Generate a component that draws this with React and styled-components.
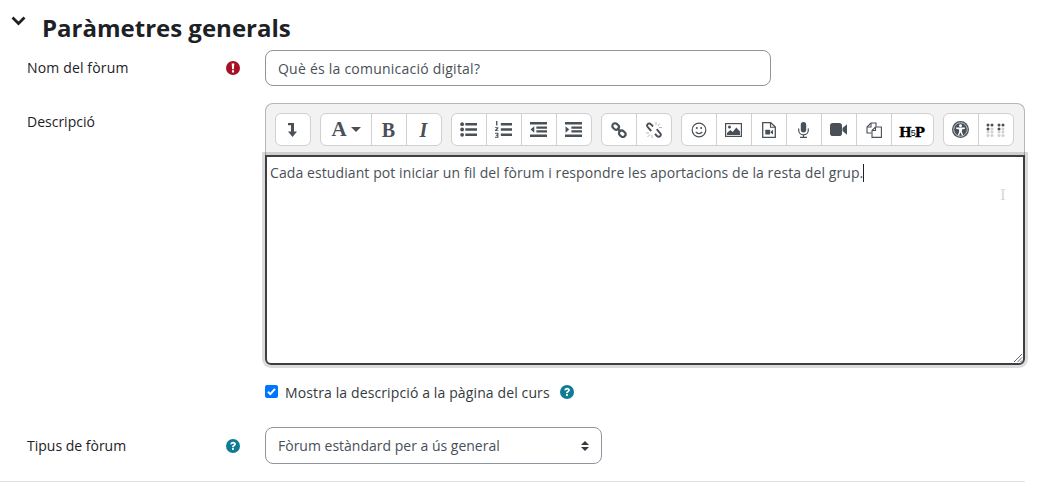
import React from 'react';
import styled, { createGlobalStyle } from 'styled-components';

const Global = createGlobalStyle`
  html, body { margin: 0; padding: 0; background: #fff; }
  body { font-family: "Open Sans", "Noto Sans", sans-serif; font-size: 14px; color: #1d2125; }
  * { box-sizing: border-box; }
`;
const Page = styled.div`
  width: 1048px; height: 483px; overflow: hidden; display: flex; flex-direction: column;
`;
const Section = styled.section`
  width: 1025px; height: 482px; border-bottom: 1px solid #dee2e6; padding-top: 12px;
`;
const Header = styled.div`
  display: flex; align-items: flex-start; height: 33px; padding-left: 11px;
`;
const Chevron = styled.svg`
  width: 15px; height: 10px; margin-top: 4px; margin-right: 16px; flex: none;
`;
const Heading = styled.h3`
  margin: 0; font-size: 24px; line-height: 32px; font-weight: 700; color: #1d2125;
`;
const Row = styled.div`
  display: flex; align-items: ${p => p.$top ? 'flex-start' : 'center'}; padding-left: 27px; margin-top: ${p => p.$mt || 0}px;
`;
const LabelCol = styled.div`
  width: 238px; flex: none; display: flex; align-items: center; justify-content: space-between; padding-right: 25px;
  padding-top: ${p => p.$pt || 0}px; line-height: 20px;
`;
const LabelText = styled.span`
  letter-spacing: ${p => p.$ls || 0}px;
`;
const Icon = styled.svg`
  width: 14px; height: 14px; flex: none;
`;
const Input = styled.div`
  width: 506px; height: 36px; border: 1px solid #8f959e; border-radius: 8px; padding: 0 12px;
  display: flex; align-items: center; color: #495057; letter-spacing: .23px;
`;
const Editor = styled.div`
  width: 760px; flex: none;
`;
const Toolbar = styled.div`
  height: 52px; background: #f2f2f2; border: 1px solid #b7b7b7; border-bottom: 0; border-radius: 8px 8px 0 0;
  display: flex; align-items: flex-start; padding: 9px 0 0 8.5px; gap: 9px;
`;
const Group = styled.div`
  display: flex; height: 33px; background: #fff; border: 1px solid #d0d0d0; border-radius: 6px; overflow: hidden;
`;
const Btn = styled.div`
  width: ${p => p.$w || 35}px; height: 100%; display: flex; align-items: center; justify-content: center; flex: none;
  &:first-child { width: ${p => (p.$w || 35) - 1}px; }
  & + & { border-left: 1px solid #d0d0d0; }
`;
const Glyph = styled.svg`
  width: ${p => p.$w || 16}px; height: ${p => p.$h || 16}px; display: block;
`;
const SerifGlyph = styled.span`
  font: ${p => p.$i ? 'italic' : 'normal'} 700 ${p => p.$s || 20}px "Liberation Serif", serif; color: #495057; line-height: 1;
`;
const AWrap = styled.span`
  display: flex; align-items: center; gap: 4px; margin-left: 1px;
`;
const Caret = styled.span`
  width: 0; height: 0; border: 5px solid transparent; border-top: 5px solid #495057; border-bottom: 0;
`;
const H5PMark = styled.span`
  display: flex; align-items: baseline; margin-top: 7px; color: #000;
  font: 700 13.5px "DejaVu Serif", serif; line-height: 1; -webkit-text-stroke: .3px #000;
`;
const H5PFive = styled.span`
  font: 400 9px "Liberation Sans", sans-serif; margin: 0 -1px; position: relative; top: -1px; -webkit-text-stroke: 0;
`;
const TextAreaWrap = styled.div`
  position: relative; height: 210px; border: 2px solid #3c4044; border-radius: 0 0 6px 6px;
  box-shadow: 0 0 0 3px rgba(0,0,0,0.14); padding: 6px 3px; line-height: 20px; color: #495057;
  letter-spacing: .09px;
`;
const Cursor = styled.span`
  display: inline-block; width: 1px; height: 18px; background: #222; vertical-align: -4px;
`;
const Grip = styled.svg`
  position: absolute; right: 0; bottom: 0; width: 12px; height: 12px;
`;
const IBeam = styled.span`
  position: absolute; left: 733px; top: 28px; font: 300 17px "Liberation Serif", serif; color: #d8d8d8;
`;
const CheckRow = styled.div`
  display: flex; align-items: center; margin: 17px 0 0 265px; height: 20px; color: #343a40; letter-spacing: .12px;
`;
const Check = styled.span`
  width: 13px; height: 13px; background: #0075ff; border-radius: 2px; margin-right: 7px; display: flex; align-items: center; justify-content: center; margin-top: -1px;
`;
const HelpAfter = styled.span`
  margin-left: 10px; display: flex;
`;
const Select = styled.div`
  width: 337px; height: 37px; border: 1px solid #8f959e; border-radius: 8px; padding: 0 12px;
  display: flex; align-items: center; justify-content: space-between; color: #495057;
`;
const Arrows = styled.svg`
  width: 8px; height: 10px; flex: none;
`;

const C = '#495057';
const Help = () => (
  <Icon viewBox="0 0 16 16">
    <circle cx="8" cy="8" r="8" fill="#0f7c93" />
    <path d="M4.900 6.100C5 4.300 6.400 3.200 8.100 3.200c1.900 0 3.200 1.100 3.200 2.600 0 1.300-.8 1.900-1.600 2.400-.7.400-.9.700-.9 1.300H6.900c0-1.300.4-1.900 1.300-2.400.6-.4 1-.7 1-1.200 0-.6-.5-.9-1.100-.9-.7 0-1.100.4-1.200 1.100zM6.900 10.300h2V12.500h-2z" fill="#fff" />
  </Icon>
);
const Lines = ({ children }) => <Glyph viewBox="0 0 16 16" $w={17} $h={17} fill={C}>{children}</Glyph>;

const groups = [
  [{ k: 'c', el: <Glyph viewBox="0 0 9 14" $w={9} $h={14}><path d="M0 0h6v8.500h3L4.500 14 0 8.500h3V2.200H0z" fill={C} /></Glyph> }],
  [
    { k: 'a', el: <AWrap><SerifGlyph $s={21}>A</SerifGlyph><Caret /></AWrap>, w: 51 },
    { k: 'b', el: <SerifGlyph $s={20}>B</SerifGlyph> },
    { k: 'i', el: <SerifGlyph $i $s={20}>I</SerifGlyph> },
  ],
  [
    { k: 'ul', el: <Lines><circle cx="2" cy="3" r="1.800"/><circle cx="2" cy="8" r="1.800"/><circle cx="2" cy="13" r="1.800"/><path d="M5 1.800h11v2.400H5zM5 6.800h11v2.400H5zM5 11.800h11v2.400H5z"/></Lines> },
    { k: 'ol', el: <Lines><path d="M5.500 1.800H16v2.400H5.500zM5.500 6.800H16v2.400H5.500zM5.500 11.800H16v2.400H5.500z"/><path d="M1 0h1.300v4.200H1zM0 5.800h3.200v1L1.600 8.600h1.600v.9H0v-.9L1.700 6.700H0zM0 11h3.200v4.800H0v-.9h2.100v-1H.8v-.9h1.300v-1H0z"/></Lines> },
    { k: 'od', el: <Lines><path d="M0 1h16v2.400H0zM6 5.200h10v2H6zM6 8.800h10v2H6zM0 12.600h16V15H0zM4 5v6L.5 8z"/></Lines> },
    { k: 'in', el: <Lines><path d="M0 1h16v2.400H0zM6 5.200h10v2H6zM6 8.800h10v2H6zM0 12.600h16V15H0zM.5 5v6L4 8z"/></Lines> },
  ],
  [
    { k: 'ln', el: <Glyph viewBox="0 0 16 16" fill="none" stroke={C} strokeWidth="2.200"><rect x="1.200" y="1.800" width="7" height="5.400" rx="2.700" transform="rotate(42 4.700 4.400)"/><rect x="7.800" y="9" width="7" height="5.400" rx="2.700" transform="rotate(42 11.300 11.600)"/><path d="M6 6.500l4 3.200"/></Glyph> },
    { k: 'ul2', el: <Glyph viewBox="0 0 16 16" fill="none" stroke={C} strokeWidth="1.900"><path d="M7 4.500L5 2.300C3.900 1.200 2.400 1.400 1.700 2.200.9 3 1 4.300 1.800 5.200l3.400 3.800"/><path d="M9 11.800l2 2.200c1 1 2.500.9 3.200.1.800-.9.700-2.200-.2-3.100L10.700 7.200"/><path d="M10 0v3M13.700 1.500L12 4M16 5.500h-3M1.500 15L4 12.500M6 16v-3M0 11h3" stroke="#b5b5b5" strokeWidth="1"/></Glyph> },
  ],
  [
    { k: 'em', el: <Glyph viewBox="0 0 16 16" fill="none" stroke={C} strokeWidth="1.200"><circle cx="8" cy="8" r="6.800"/><path d="M4.800 9.800c1.600 2.300 4.800 2.300 6.400 0"/><circle cx="5.800" cy="6" r="1" fill={C} stroke="none"/><circle cx="10.200" cy="6" r="1" fill={C} stroke="none"/></Glyph> },
    { k: 'im', el: <Glyph viewBox="0 0 17 14" $w={17} $h={14}><rect x=".6" y=".6" width="15.800" height="12.800" fill="#fff" stroke={C} strokeWidth="1.200"/><path d="M2 12v-2l3.400-3 2.300 2 3.600-4.500L15 8.500V12z" fill={C}/><circle cx="4.500" cy="4" r="1.500" fill={C}/></Glyph> },
    { k: 'vd', el: <Glyph viewBox="0 0 14 16" $w={14} $h={16}><path d="M.7.700h8L13.300 5v10.300H.7z" fill="#fff" stroke={C} strokeWidth="1.300"/><path d="M8.500.8V5.300h4.800" fill="none" stroke={C} strokeWidth="1.100"/><rect x="3.300" y="7.700" width="4.700" height="4.800" rx=".6" fill={C}/><path d="M8.300 10l2.700-2.200v4.600L8.300 10.400z" fill={C}/></Glyph> },
    { k: 'mc', el: <Glyph viewBox="0 0 11 16" $w={11} $h={16}><rect x="2.800" y="0" width="5.400" height="10.500" rx="2.700" fill={C}/><path d="M.7 6.500v1.800c0 2.600 2.100 4.500 4.800 4.500s4.800-1.900 4.800-4.500V6.500M5.500 12.500v2.800M2 15.400h7" fill="none" stroke={C} strokeWidth="1.200"/></Glyph> },
    { k: 'cm', el: <Glyph viewBox="0 0 17 13" $w={17} $h={13}><rect x="0" y="0" width="12" height="13" rx="2.800" fill={C}/><path d="M12.500 5l4.500-3.800v10.600L12.500 8z" fill={C}/></Glyph> },
    { k: 'cp', el: <Glyph viewBox="0 0 16 16" fill="none" stroke={C} strokeWidth="1.100"><path d="M5.500 11H1V5l4-4h5v3.700"/><path d="M5 1v4H1"/><path d="M6 15.400V8.500L9.500 5h5.900v10.400z"/><path d="M9.500 5v3.500H6"/></Glyph> },
    { k: 'h5', el: <H5PMark>H<H5PFive>5</H5PFive>P</H5PMark>, w: 42 },
  ],
  [
    { k: 'ac', el: <Glyph viewBox="0 0 16 16" $w={17} $h={17}><circle cx="8" cy="8" r="8" fill={C}/><circle cx="8" cy="8" r="6.400" fill="none" stroke="#d9dde2" strokeWidth=".8"/><circle cx="8" cy="4.500" r="1.400" fill="#fff"/><path d="M3.800 6h8.400v1.300l-2.900.6v2.100l1.200 3.300-1.100.4L8 10.700l-1.400 3-1.100-.4 1.200-3.300V7.900l-2.900-.6z" fill="#fff"/></Glyph> },
    { k: 'br', el: <Glyph viewBox="0 0 20 14" $w={20} $h={14}><g fill={C}><circle cx="2" cy="2" r="1.500"/><circle cx="6" cy="2" r="1.500"/><circle cx="13" cy="2" r="1.500"/><circle cx="17" cy="2" r="1.500"/><circle cx="2" cy="6" r="1.500"/><circle cx="13" cy="6" r="1.500"/></g><g fill="#d0d0d0"><circle cx="6" cy="6" r="1.500"/><circle cx="17" cy="6" r="1.500"/><circle cx="2" cy="9" r="1.500"/><circle cx="6" cy="9" r="1.500"/><circle cx="13" cy="9" r="1.500"/><circle cx="17" cy="9" r="1.500"/><circle cx="2" cy="12.500" r="1.500"/><circle cx="6" cy="12.500" r="1.500"/><circle cx="13" cy="12.500" r="1.500"/><circle cx="17" cy="12.500" r="1.500"/></g></Glyph> },
  ],
];

export default function App() {
  return (
    <Page>
      <Global />
      <Section>
        <Header>
          <Chevron viewBox="0 0 15 10"><path d="M1.500 1.500l6 6 6-6" fill="none" stroke="#1d2125" strokeWidth="2.800" /></Chevron>
          <Heading>Paràmetres generals</Heading>
        </Header>
        <Row $mt={5}>
          <LabelCol>
            <LabelText $ls={.15}>Nom del fòrum</LabelText>
            <Icon viewBox="0 0 16 16"><circle cx="8" cy="8" r="8" fill="#a80f24"/><path d="M6.500 2.800h3l-.5 6.700H7zM6.800 10.700h2.400v2.400H6.800z" fill="#fff"/></Icon>
          </LabelCol>
          <Input>Què és la comunicació digital?</Input>
        </Row>
        <Row $top $mt={17}>
          <LabelCol $pt={9}><LabelText>Descripció</LabelText></LabelCol>
          <Editor>
            <Toolbar>
              {groups.map((g, i) => (
                <Group key={i}>
                  {g.map(b => <Btn key={b.k} $w={b.w}>{b.el}</Btn>)}
                </Group>
              ))}
            </Toolbar>
            <TextAreaWrap>
              Cada estudiant pot iniciar un fil del fòrum i respondre les aportacions de la resta del grup.<Cursor />
              <IBeam>I</IBeam>
              <Grip viewBox="0 0 12 12"><path d="M11 3L3 11M11 6.500L6.500 11M11 9.500L9.500 11" stroke="#666" strokeWidth="1"/></Grip>
            </TextAreaWrap>
          </Editor>
        </Row>
        <CheckRow>
          <Check>
            <svg width="11" height="11" viewBox="0 0 11 11"><path d="M2 5.700l2.300 2.400L9 2.800" fill="none" stroke="#fff" strokeWidth="2"/></svg>
          </Check>
          <span>Mostra la descripció a la pàgina del curs</span>
          <HelpAfter><Help /></HelpAfter>
        </CheckRow>
        <Row $mt={25}>
          <LabelCol><LabelText>Tipus de fòrum</LabelText><Help /></LabelCol>
          <Select>
            <span>Fòrum estàndard per a ús general</span>
            <Arrows viewBox="0 0 8 10"><path d="M4 0l4 4H0zM4 10L0 6h8z" fill="#343a40"/></Arrows>
          </Select>
        </Row>
      </Section>
    </Page>
  );
}
